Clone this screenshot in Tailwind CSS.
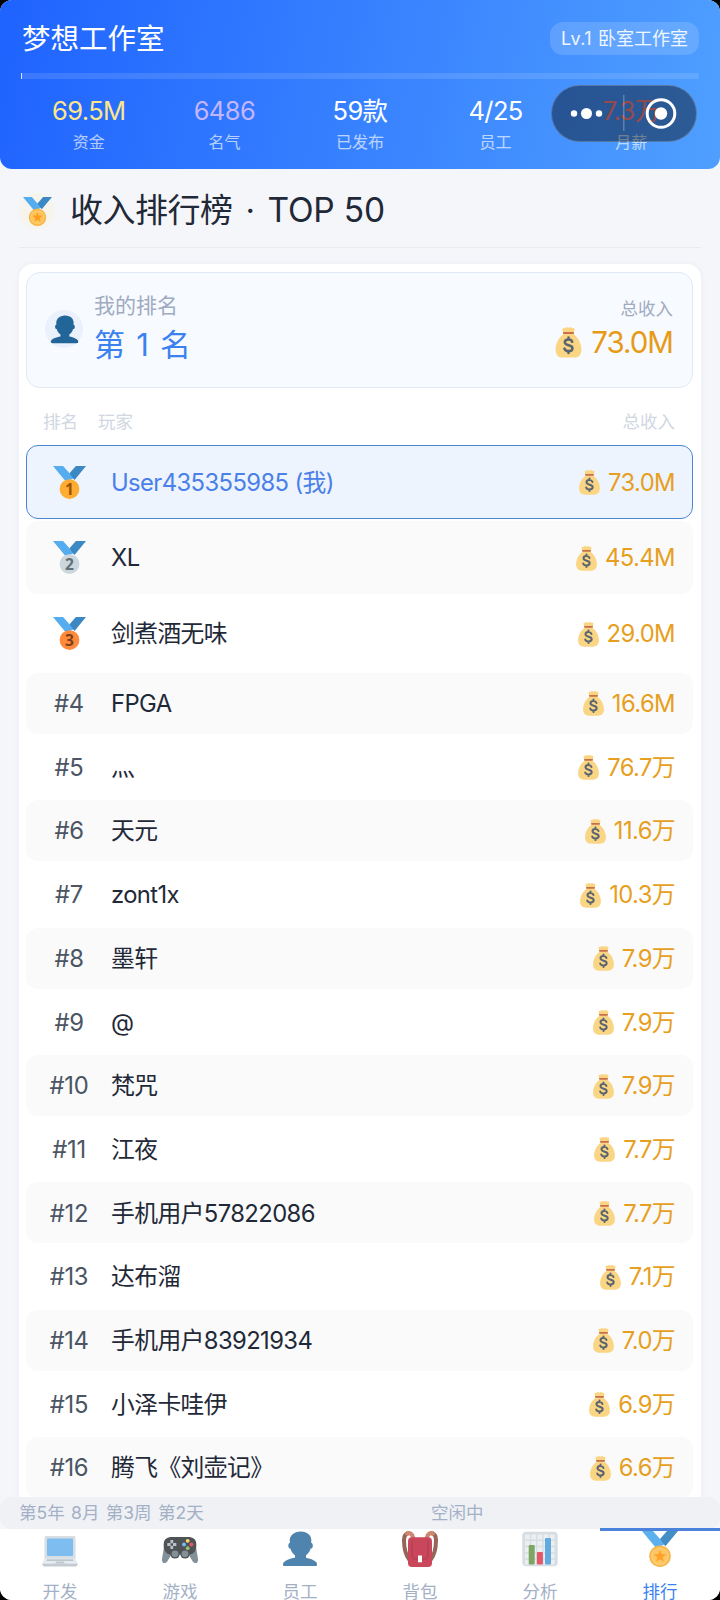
<!DOCTYPE html>
<html lang="zh-CN">
<head>
  <meta charset="utf-8" />
  <title>梦想工作室</title>
  <script src="https://cdn.jsdelivr.net/npm/@tailwindcss/browser@4"></script>
</head>
<body class="bg-black">
<svg class="hidden">
  <symbol id="ribbon" viewBox="0 0 36 36">
    <path fill="#55acee" d="M18 8l-7-8H0l14 17 11.500-4.750z" />
    <path fill="#3b88c3" d="M25 0l-7 8 5.400 7.300 1.200-1.500L36 0z" />
  </symbol>
  <symbol id="medal" viewBox="0 0 36 36">
    <use href="#ribbon" />
    <circle cx="18" cy="25.200" r="10.800" fill="#f7b544" />
    <circle cx="18" cy="25.200" r="8.800" fill="#ffd07a" />
    <circle cx="18" cy="25.200" r="7.800" fill="#fcc45a" />
    <path fill="#ff9d1f" d="M18 18.800l1.700 4.300 4.600.3-3.600 2.900 1.200 4.500-3.900-2.500-3.900 2.500 1.200-4.500-3.600-2.900 4.600-.3z" />
  </symbol>
  <symbol id="bag" viewBox="0 0 30 36">
    <path fill="#fad584" d="M8 3c-.5-1.700 1.200-2.500 2.500-1.500C11.500-.2 13.500-.2 15 1c1.500-1.200 3.500-1.200 4.500.5C20.800.500 22.500 1.300 22 3l-1 5.500c5 3 9 11 9 17.500 0 7-3.500 9.500-8.500 9.500h-13C3.500 35.500 0 33 0 26 0 19.500 4 11.500 9 8.500z" />
    <rect x="8.500" y="5.800" width="13" height="2.400" rx="1.200" fill="#c9704a" />
    <path fill="none" stroke="#5b6570" stroke-width="2.900" stroke-linecap="round" d="M19.300 17.200c-.6-1.900-2.200-2.700-4.300-2.700-2.500 0-4.300 1.200-4.300 3.300 0 4.600 8.900 2.200 8.900 6.800 0 2.200-2 3.400-4.600 3.400-2.300 0-4.100-1-4.700-2.900M15 12.300v2M15 28v2.200" />
  </symbol>
  <symbol id="person" viewBox="0 0 36 36">
    <path fill="#226699" d="M24 26.799v-2.566c2-1.348 4.080-3.779 4.703-6.896.186.103.206.170.413.170.991 0 1.709-1.287 1.709-2.873 0-1.562-.823-2.827-1.794-2.865.187-.674.293-1.577.293-2.735C29.324 5.168 26 .527 18.541.527c-6.629 0-10.777 4.641-10.777 8.507 0 1.123.069 2.043.188 2.755-.911.137-1.629 1.352-1.629 2.845 0 1.587.804 2.873 1.796 2.873.206 0 .025-.067.209-.170C8.952 20.453 11 22.884 13 24.232v2.414c-5 .645-12 3.437-12 6.230v1.061C1 35 2.076 35 3.137 35h29.725C33.924 35 35 35 35 33.938v-1.061c0-2.615-6-5.225-11-6.078z" />
  </symbol>
  <symbol id="laptop" viewBox="0 0 36 36">
    <path fill="#ccd6dd" d="M2.500 7C2.500 5.500 3.500 5 4.500 5h27c1.200 0 2 .5 2 2v21h-31z" />
    <rect x="5" y="7.500" width="26" height="17.500" rx="1" fill="#5dadec" />
    <path fill="#e1e8ed" d="M2.500 27.500h31l2.200 5H.3z" />
    <path fill="#9aaab4" d="M5 28.500h26l.6 1.300H4.400z" />
    <path fill="#b4c0c8" d="M.3 32.500h35.400c0 2.300-.8 3-2 3H2.300c-1.200 0-2-.7-2-3z" />
    <path fill="#aebbc1" d="M14 30.500h8l.6 2h-9.200z" />
  </symbol>
  <symbol id="gamepad" viewBox="0 0 36 36">
    <path fill="#66757f" d="M2.500 13L0 28c-.4 4.500 3.500 5.500 5.500 2l5-8zM33.500 13L36 28c.4 4.500-3.500 5.500-5.500 2l-5-8z" />
    <path fill="#25292d" d="M10 6h16c5 0 8 2 8.300 7 .3 6-2 10.500-7.300 10.500H9C3.700 23.500 1.400 19 1.700 13 2 8 5 6 10 6z" />
    <circle cx="13" cy="22.800" r="4.800" fill="#25292d" />
    <circle cx="23" cy="22.800" r="4.800" fill="#25292d" />
    <circle cx="13" cy="22.800" r="3.400" fill="#66757f" />
    <circle cx="23" cy="22.800" r="3.400" fill="#66757f" />
    <path stroke="#aab4bb" stroke-width="2.800" d="M9.800 9v3.300M9.800 14.700V18M5.300 13.500h3.300M11 13.500h3.300" />
    <circle cx="25.700" cy="9.800" r="1.900" fill="#ffcc4d" />
    <circle cx="25.700" cy="17.200" r="1.900" fill="#77b255" />
    <circle cx="22" cy="13.500" r="1.900" fill="#55acee" />
    <circle cx="29.400" cy="13.500" r="1.900" fill="#dd2e44" />
  </symbol>
  <symbol id="backpack" viewBox="0 0 36 36">
    <path fill="none" stroke="#7d3f2e" stroke-width="4" d="M7.500 29C3.500 24 2 16 2 9 2 4 4 2 8 2M28.500 29C32.500 24 34 16 34 9 34 4 32 2 28 2" />
    <path fill="none" stroke="#c1694f" stroke-width="4.200" d="M4 4C6 1 10.500 1 11.500 9M32 4C30 1 25.500 1 24.500 9" />
    <rect x="6" y="6.300" width="24" height="29.700" rx="4" fill="#be1931" />
    <path fill="none" stroke="#9c1228" stroke-width="1.300" d="M10 9v15c0 3 1.500 4 4 4h8c2.500 0 4-1 4-4V9" />
    <rect x="16" y="24.500" width="4" height="6.800" fill="#fff" />
  </symbol>
  <symbol id="chart" viewBox="0 0 36 36">
    <rect x=".3" y=".8" width="35.400" height="34.500" rx="4" fill="#ccd6dd" />
    <path stroke="#e6ecf0" stroke-width="4.800" stroke-dasharray="4.800 1.400" d="M3 6h30M3 12.300h30M3 18.600h30M3 24.900h30M3 31.200h30" />
    <rect x="6.700" y="14" width="6" height="19.500" rx="1" fill="#5c913b" />
    <rect x="14.900" y="21" width="6" height="12.500" rx="1" fill="#dd2e44" />
    <rect x="23" y="7" width="6" height="26.500" rx="1" fill="#3b94d9" />
  </symbol>
</svg>

<div class="relative flex h-[1600px] w-[720px] flex-col overflow-hidden rounded-[12px] bg-[#f5f6fa] font-['Inter','Noto_Sans_CJK_SC',sans-serif] text-[#1f2937]">
  <header class="h-[169px] shrink-0 rounded-b-[12px] bg-linear-[100deg] from-[#1f63ff] to-[#4f9fff] px-[21px] pt-[22px]">
    <div class="flex h-[33px] items-center justify-between">
      <h1 class="pt-[2px] pl-px text-[28.500px] leading-none text-white">梦想工作室</h1>
      <span class="flex h-[33px] w-[149px] items-center justify-center rounded-[13px] bg-white/15 text-[18px] whitespace-nowrap text-white/90"><span class="mr-[6px] tracking-[0.4px]">Lv.1</span>卧室工作室</span>
    </div>
    <div class="mt-[18px] h-[6px] rounded-[2px] bg-white/12">
      <div class="h-full w-px bg-white/80"></div>
    </div>
    <div id="stats" class="mt-[16px] grid grid-cols-5 text-center"></div>
  </header>

  <!-- mini program capsule -->
  <div class="absolute top-[85px] left-[551px] flex h-[57px] w-[146px] items-center rounded-full border border-white/20 bg-black/42">
    <svg class="h-[55px] w-[144px]" viewBox="0 0 144 55" fill="#fff">
      <circle cx="22" cy="27.500" r="3.200" />
      <circle cx="34.500" cy="27.500" r="5.500" />
      <circle cx="47" cy="27.500" r="3.200" />
      <path d="M71 9h1.500v36H71z" fill-opacity=".25" />
      <circle cx="109" cy="27.500" r="13.800" fill="none" stroke="#fff" stroke-width="3" />
      <circle cx="109" cy="27.500" r="6.200" />
    </svg>
  </div>

  <main class="flex min-h-0 flex-1 flex-col overflow-hidden px-[19px]">
    <div class="flex h-[79px] shrink-0 items-center border-b border-[#e9ebf0] pt-[6px]">
      <span class="flex size-[36px] items-center justify-center rounded-full bg-[#f7f4ee]">
        <svg class="size-[29px]"><use href="#medal" /></svg>
      </span>
      <h2 class="ml-[15px] flex text-[33px] leading-none tracking-[-0.500px]">收入排行榜<span class="mx-[13px]">·</span><span class="text-[33.500px] tracking-[-0.200px]">TOP 50</span></h2>
    </div>

    <section class="mt-[16px] h-[1300px] shrink-0 rounded-t-[14px] bg-white pt-[8px] pr-[8px] pl-[7px] shadow-[0_0_6px_rgba(30,50,90,0.05)]">
      <div class="flex h-[116px] items-center justify-between rounded-[14px] border-[1.500px] border-[#e1e9f4] bg-[#f7faff] pr-[19px] pb-[2px] pl-[18px]">
        <div class="flex items-center">
          <span class="flex size-[38px] items-center justify-center rounded-full bg-[#eaf0fc]">
            <svg class="size-[29px]"><use href="#person" /></svg>
          </span>
          <div class="ml-[11px]">
            <div class="h-[32px] text-[21px] leading-[28px] text-[#a0abc0]">我的排名</div>
            <div class="h-[42px] text-[31px] leading-[42px] whitespace-pre text-[#3b82f0] [word-spacing:2.500px]">第 1 名</div>
          </div>
        </div>
        <div class="text-right">
          <div class="h-[29px] text-[17.500px] leading-[27px] text-[#a0abc0]">总收入</div>
          <div class="flex h-[40px] items-center justify-end gap-[9px] pb-[2px] text-[29.500px] tracking-[-1px] text-[#e79a17]">
            <svg class="h-[31px] w-[27px]"><use href="#bag" /></svg>73.0M
          </div>
        </div>
      </div>
      <div class="flex h-[57px] items-center pt-[11px] pr-[18px] pl-[17px] text-[17.500px] text-[#d0d7e2]">
        <span class="w-[55px]">排名</span>
        <span class="flex-1">玩家</span>
        <span>总收入</span>
      </div>
      <div id="rows" class="flex flex-col gap-[2.700px]"></div>
    </section>
  </main>

  <div class="relative z-10 flex h-[32px] shrink-0 items-center rounded-[12px] bg-[#eff1f5] px-[19px] pt-px text-[17.500px] text-[#a3b0c6]">
    <span class="w-[412px] whitespace-pre [word-spacing:1.500px]">第5年 8月 第3周 第2天</span>
    <span>空闲中</span>
  </div>
  <nav id="tabs" class="grid h-[71px] shrink-0 grid-cols-6 bg-white text-center text-[17.500px]"></nav>
</div>

<script>
  const stats = [
    ['69.5M', '资金', 'text-[#fde68a]'],
    ['6486', '名气', 'text-[#c4b5fd]'],
    ['59款', '已发布', 'text-white'],
    ['4/25', '员工', 'text-white'],
    ['7.3万', '月薪', 'text-[#ff8080]'],
  ];
  document.getElementById('stats').innerHTML = stats.map(([value, label, color]) => `
    <div>
      <div class="h-[32px] text-[25.500px] leading-[32px] tracking-[-0.600px] ${color}">${value}</div>
      <div class="mt-[3px] text-[16px] leading-[24px] text-white/65">${label}</div>
    </div>`).join('');

  const medals = [
    ['#ffac33', '#9e5200'],
    ['#ccd6dd', '#627077'],
    ['#ff8a3b', '#7c4119'],
  ];
  const players = [
    ['User435355985 (我)', '73.0M'], ['XL', '45.4M'], ['剑煮酒无味', '29.0M'], ['FPGA', '16.6M'],
    ['灬', '76.7万'], ['天元', '11.6万'], ['zont1x', '10.3万'], ['墨轩', '7.9万'],
    ['@', '7.9万'], ['梵咒', '7.9万'], ['江夜', '7.7万'], ['手机用户57822086', '7.7万'],
    ['达布溜', '7.1万'], ['手机用户83921934', '7.0万'], ['小泽卡哇伊', '6.9万'], ['腾飞《刘壶记》', '6.6万'],
  ];
  document.getElementById('rows').innerHTML = players.map(([name, income], i) => {
    const height = i === 0 ? 'h-[74.300px] -mb-px' : i < 3 ? 'h-[73.300px]' : 'h-[61px]';
    const look = i === 0
      ? 'border-[1.500px] border-[#4a86d0] bg-[#edf4fe] text-[#4a80e8]'
      : i % 2 ? 'border border-transparent bg-[#fafafb]' : 'border border-transparent';
    const rank = i < 3
      ? `<svg class="size-[33px]" viewBox="0 0 36 36"><use href="#ribbon" /><circle cx="18" cy="25.200" r="10.800" fill="${medals[i][0]}" /><text x="18" y="31.400" text-anchor="middle" class="font-['Open_Sans',sans-serif] text-[17px] font-bold tracking-normal" fill="${medals[i][1]}">${i + 1}</text></svg>`
      : `#${i + 1}`;
    return `
      <div class="flex ${height} shrink-0 items-center rounded-[12px] pt-px pr-[17px] pl-[13px] text-[23.800px] tracking-[-0.600px] ${look}">
        <span class="flex w-[58px] justify-center ${i < 3 ? 'pb-px' : 'tracking-[-0.300px]'} text-[#4b5563]">${rank}</span>
        <span class="ml-[13px] flex-1">${name}</span>
        <span class="flex items-center gap-[8px] text-[#e79f22]"><svg class="h-[25px] w-[21px]"><use href="#bag" /></svg>${income}</span>
      </div>`;
  }).join('');

  const tabs = [['laptop', '开发'], ['gamepad', '游戏'], ['person', '员工'], ['backpack', '背包'], ['chart', '分析'], ['medal', '排行']];
  document.getElementById('tabs').innerHTML = tabs.map(([icon, label]) => {
    const active = icon === 'medal';
    return `
      <div class="flex flex-col items-center ${active ? 'z-20 -mt-px border-t-[3px] border-[#4a82dc] text-[#3b82f0]' : 'border-t-[2px] border-transparent text-[#a3b0c6]'}">
        <svg class="size-[36px] shrink-0 ${active ? 'opacity-95' : 'opacity-80'}"><use href="#${icon}" /></svg>
        <span class="mt-[12px] leading-[26px]">${label}</span>
      </div>`;
  }).join('');
</script>
</body>
</html>
